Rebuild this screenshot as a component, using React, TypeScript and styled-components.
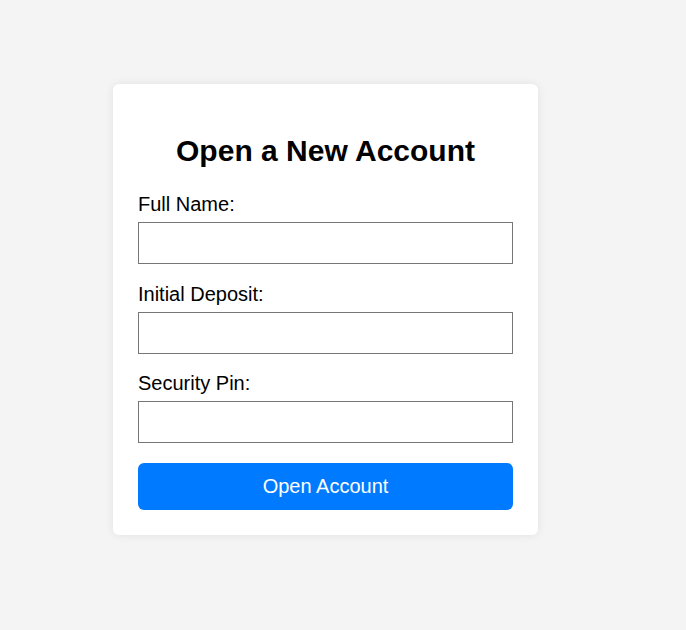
import React from "react";
import styled, { createGlobalStyle } from "styled-components";

const GlobalStyle = createGlobalStyle`
  html, body {
    margin: 0;
    padding: 0;
    background-color: #f4f4f4;
    font-family: "Liberation Sans", Arial, sans-serif;
  }
`;

const Page = styled.div`
  min-height: 630px;
  box-sizing: border-box;
  padding: 84px 0 0 113px;
`;

const Card = styled.form`
  width: 425px;
  box-sizing: border-box;
  padding: 25px;
  background-color: #ffffff;
  border-radius: 6px;
  box-shadow: 0 0 10px rgba(0, 0, 0, 0.08);
`;

const Title = styled.h2`
  margin: 25px 0;
  font-size: 30px;
  font-weight: bold;
  text-align: center;
  color: #000;
`;

const Label = styled.label`
  display: block;
  margin-bottom: 6px;
  font-size: 20px;
  color: #000;
`;

const Input = styled.input<{ $last?: boolean }>`
  display: block;
  width: 100%;
  height: 42px;
  box-sizing: border-box;
  margin: 0 0 ${(props) => (props.$last ? "19.5px" : "18.5px")};
  padding: 0 10px;
  border: 1px solid #767676;
  font-family: inherit;
  font-size: 20px;
  background: #fff;
`;

const Button = styled.button`
  display: block;
  width: 100%;
  height: 47px;
  border: none;
  border-radius: 6px;
  background-color: #007bff;
  color: #fff;
  font-family: inherit;
  font-size: 20px;
  cursor: pointer;
`;

const fields = [
  { id: "name", label: "Full Name:", type: "text" },
  { id: "deposit", label: "Initial Deposit:", type: "number" },
  { id: "pin", label: "Security Pin:", type: "password" },
];

export default function App() {
  return (
    <>
      <GlobalStyle />
      <Page>
        <Card onSubmit={(e) => e.preventDefault()}>
          <Title>Open a New Account</Title>
          {fields.map((f, i) => (
            <React.Fragment key={f.id}>
              <Label htmlFor={f.id}>{f.label}</Label>
              <Input id={f.id} type={f.type} $last={i === fields.length - 1} />
            </React.Fragment>
          ))}
          <Button type="submit">Open Account</Button>
        </Card>
      </Page>
    </>
  );
}
